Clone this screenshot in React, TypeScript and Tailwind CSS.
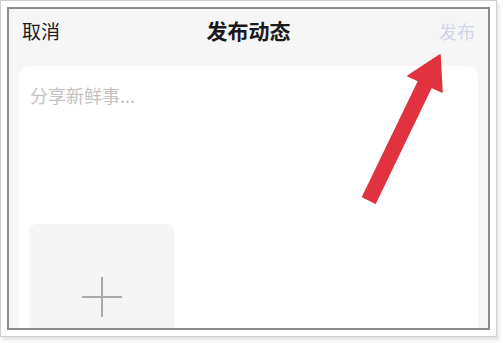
import React from "react";

function Arrow() {
  return (
    <svg
      className="absolute left-0 top-0 pointer-events-none"
      width={503}
      height={343}
      viewBox="0 0 503 343"
    >
      <polygon
        points="362.7,196.9 418.7,80.9 408,76 440,55 442,92 431.3,87.1 375.3,203.1"
        fill="#e0323f"
        stroke="#e0323f"
        strokeWidth={1.5}
        strokeLinejoin="round"
      />
    </svg>
  );
}

export default function App() {
  return (
    <div
      className="relative w-[503px] h-[343px] bg-white overflow-hidden"
      style={{ fontFamily: '"Noto Sans CJK SC", "Noto Sans", sans-serif' }}
    >
      {/* outer frame */}
      <div className="w-[497px] h-[337px] border border-[#cfcfcf] bg-white shadow-[2px_3px_4px_rgba(0,0,0,0.12)] pt-[6px] pl-[6px]">
        {/* inner screen */}
        <div className="w-[483px] h-[323px] border-2 border-[#8c8c8c] bg-[#f6f6f6] overflow-hidden flex flex-col">
          <div className="h-[43px] shrink-0 flex items-center justify-between px-[13px] relative">
            <span className="text-[19px] text-[#1c1c1c] leading-none">取消</span>
            <span className="absolute left-1/2 -translate-x-1/2 text-[21px] font-bold text-[#1a1a1a] leading-none">
              发布动态
            </span>
            <span className="text-[18px] text-[#cfd4e8] leading-none">发布</span>
          </div>
          <div className="pt-[14px] px-[10px] flex-1">
            <div className="bg-white rounded-[10px] h-[300px] px-[10px] pt-[20px]">
              <div className="text-[18px] text-[#c2c2c2] leading-none pl-[1px]">分享新鲜事...</div>
              <div className="mt-[120px] w-[145px] h-[145px] rounded-[8px] bg-[#f5f5f5] flex items-center justify-center">
                <svg width={40} height={40} viewBox="0 0 40 40">
                  <path d="M20 0V40M0 20H40" stroke="#ababab" strokeWidth={2} />
                </svg>
              </div>
            </div>
          </div>
        </div>
      </div>
      <Arrow />
    </div>
  );
}
